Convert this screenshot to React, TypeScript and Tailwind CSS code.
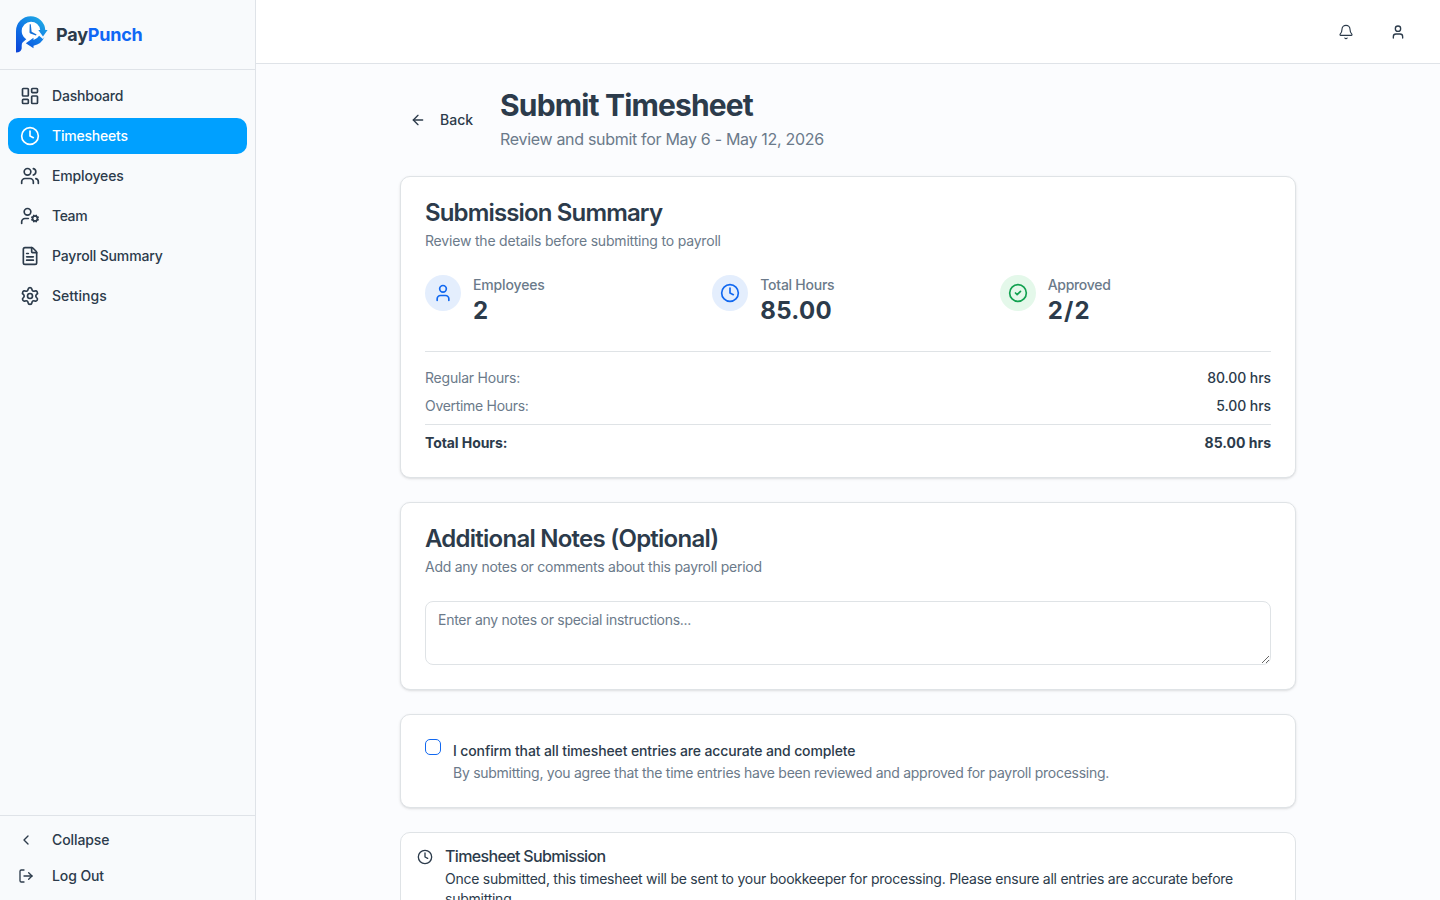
import { useState, type ReactNode } from "react";
import clsx from "clsx";
import {
  ArrowLeft,
  Bell,
  ChevronLeft,
  CircleCheck,
  Clock,
  FileText,
  LayoutDashboard,
  LogOut,
  Settings,
  User,
  UserCog,
  Users,
} from "lucide-react";

function LogoMark() {
  return (
    <svg viewBox="0 0 32 38" className="h-[38px] w-8 shrink-0">
      <defs>
        <linearGradient
          id="mark"
          gradientUnits="userSpaceOnUse"
          x1="0"
          y1="34"
          x2="26"
          y2="4"
        >
          <stop offset="0" stopColor="#0b45d8" />
          <stop offset="0.5" stopColor="#0f74e6" />
          <stop offset="1" stopColor="#1ea6e4" />
        </linearGradient>
      </defs>
      <circle cx="15" cy="15" r="10" fill="#fff" />
      {/* P stem running into the top of the ring */}
      <path
        fill="url(#mark)"
        d="M0 15A14.800 14.800 0 0 1 14.800 .3A14.700 14.700 0 0 1 29.300 14H31.600L27 20.400 22.300 14H24.200A9.300 9.300 0 0 0 15 5.700A9.300 9.300 0 0 0 5.700 15A9.300 9.300 0 0 0 8.800 21.900L10.300 23.300 6.800 26.200Q5.700 27.300 5.700 29.500V32.500Q5 36.300 0 36.500z"
      />
      {/* lower sweep with its arrow head */}
      <path
        fill="url(#mark)"
        d="M28.600 20.800A14.800 14.800 0 0 1 17.500 29.700v2.600l-7.700-5 7.700-5.500v2.200a9.300 9.300 0 0 0 5.600-4.300l3.800 3.200z"
      />
      <path
        d="M13.700 8.300h1.100l.8 7.500 5 2.700-.6 1-5.600-2q-.9-.3-.9-1.300z"
        fill="#1470d8"
      />
    </svg>
  );
}

const navItems = [
  { label: "Dashboard", icon: LayoutDashboard, tracking: "tracking-[-0.2px]" },
  { label: "Timesheets", icon: Clock, tracking: "tracking-[-0.22px]" },
  { label: "Employees", icon: Users, tracking: "tracking-[-0.16px]" },
  { label: "Team", icon: UserCog, tracking: "tracking-[-0.4px]" },
  { label: "Payroll Summary", icon: FileText, tracking: "tracking-[-0.17px]" },
  { label: "Settings", icon: Settings, tracking: "tracking-[0.03px]" },
];

function Sidebar() {
  const [active, setActive] = useState("Timesheets");

  return (
    <aside className="flex w-64 shrink-0 flex-col border-r border-[#dfe3e8] bg-[#f8fafc]">
      <div className="flex h-[70px] items-center gap-2 border-b border-[#dfe3e8] px-4">
        <LogoMark />
        <span className="text-lg font-bold tracking-[-0.22px]">
          Pay<span className="text-[#0f67f5]">Punch</span>
        </span>
      </div>

      <nav className="flex flex-1 flex-col gap-1 p-2">
        {navItems.map(({ label, icon: NavIcon, tracking }) => (
          <button
            key={label}
            onClick={() => setActive(label)}
            className={clsx(
              "flex h-9 items-center gap-3 rounded-[10px] px-3 text-sm font-medium",
              tracking,
              active === label && "bg-[#00a0ff] text-white"
            )}
          >
            <NavIcon className="size-5" />
            {label}
          </button>
        ))}
      </nav>

      <div className="flex flex-col gap-1 border-t border-[#dfe3e8] p-2 text-sm font-medium tracking-[-0.1px]">
        <button className="flex h-8 items-center gap-[18px] px-2.5">
          <ChevronLeft className="size-4" />
          Collapse
        </button>
        <button className="flex h-8 items-center gap-[18px] px-2.5">
          <LogOut className="size-4" />
          Log Out
        </button>
      </div>
    </aside>
  );
}

function Card({ children }: { children: ReactNode }) {
  return (
    <section className="rounded-[10px] border border-[#dfe3e6] bg-white p-6 shadow-sm">
      {children}
    </section>
  );
}

const stats = [
  {
    label: "Employees",
    value: "2",
    icon: User,
    color: "bg-[#e4eefd] text-[#1168f0]",
    labelTracking: "tracking-[-0.15px]",
    valueTracking: "tracking-normal",
  },
  {
    label: "Total Hours",
    value: "85.00",
    icon: Clock,
    color: "bg-[#e4eefd] text-[#1168f0]",
    labelTracking: "tracking-[-0.25px]",
    valueTracking: "tracking-[0.3px]",
  },
  {
    label: "Approved",
    value: "2/2",
    icon: CircleCheck,
    color: "bg-[#e4f8ea] text-[#12a150]",
    labelTracking: "tracking-[-0.3px]",
    valueTracking: "tracking-[1.2px]",
  },
];

function SummaryCard() {
  return (
    <Card>
      <h2 className="text-2xl leading-6 font-semibold tracking-[-0.85px]">
        Submission Summary
      </h2>
      <p className="mt-1.5 text-sm tracking-[-0.19px] text-[#6b7a8a]">
        Review the details before submitting to payroll
      </p>

      <div className="mt-6 grid grid-cols-3 gap-4">
        {stats.map(
          ({ label, value, icon: StatIcon, color, labelTracking, valueTracking }) => (
            <div key={label} className="flex items-start gap-3">
              <div
                className={clsx(
                  "flex size-9 items-center justify-center rounded-full",
                  color
                )}
              >
                <StatIcon className="size-5" />
              </div>
              <div>
                <p
                  className={clsx(
                    "text-sm font-medium text-[#6b7a8a]",
                    labelTracking
                  )}
                >
                  {label}
                </p>
                <p className={clsx("text-2xl font-bold", valueTracking)}>
                  {value}
                </p>
              </div>
            </div>
          )
        )}
      </div>

      <dl className="mt-6 border-t border-[#dfe3e6] pt-4 text-sm">
        <div className="flex justify-between">
          <dt className="tracking-[-0.21px] text-[#6b7a8a]">Regular Hours:</dt>
          <dd className="font-medium tracking-[-0.08px]">80.00 hrs</dd>
        </div>
        <div className="mt-2 flex justify-between">
          <dt className="tracking-[-0.3px] text-[#6b7a8a]">Overtime Hours:</dt>
          <dd className="font-medium tracking-[-0.08px]">5.00 hrs</dd>
        </div>
        <div className="mt-2 flex justify-between border-t border-[#dfe3e6] pt-2 font-bold">
          <dt className="tracking-[-0.08px]">Total Hours:</dt>
          <dd>85.00 hrs</dd>
        </div>
      </dl>
    </Card>
  );
}

function NotesCard() {
  return (
    <Card>
      <h2 className="text-2xl leading-6 font-semibold tracking-[-0.75px]">
        Additional Notes (Optional)
      </h2>
      <p className="mt-1.5 text-sm tracking-[-0.26px] text-[#6b7a8a]">
        Add any notes or comments about this payroll period
      </p>
      <textarea
        placeholder="Enter any notes or special instructions..."
        className="mt-6 block h-16 w-full resize-y rounded-lg border border-[#dfe3e6] px-3 py-2 text-sm tracking-[-0.27px] placeholder:text-[#6b7a8a]"
      />
    </Card>
  );
}

function ConfirmCard() {
  return (
    <Card>
      <div className="flex items-start gap-3">
        <input
          id="confirm"
          type="checkbox"
          className="size-4 shrink-0 appearance-none rounded-[5px] border border-[#1168f0] bg-white checked:bg-[#1168f0]"
        />
        <div className="text-sm">
          <label
            htmlFor="confirm"
            className="block leading-6 font-medium tracking-[-0.12px]"
          >
            I confirm that all timesheet entries are accurate and complete
          </label>
          <p className="tracking-[-0.27px] text-[#6b7a8a]">
            By submitting, you agree that the time entries have been reviewed
            and approved for payroll processing.
          </p>
        </div>
      </div>
    </Card>
  );
}

export default function App() {
  return (
    <div className="flex h-screen overflow-hidden bg-[#fbfcfe] font-['Inter',sans-serif] text-[#2c3b4b]">
      <Sidebar />

      <div className="flex min-w-0 flex-1 flex-col">
        <header className="flex h-16 shrink-0 items-center justify-end gap-4 border-b border-[#dfe3e8] bg-white px-6">
          <button
            aria-label="Notifications"
            className="flex size-9 items-center justify-center"
          >
            <Bell className="size-4" strokeWidth={1.7} />
          </button>
          <button
            aria-label="Account"
            className="flex size-9 items-center justify-center"
          >
            <User className="size-4" />
          </button>
        </header>

        <main className="flex-1 overflow-hidden p-6">
          <div className="mx-auto flex max-w-4xl flex-col gap-6">
            <div className="flex items-center gap-4">
              <button className="flex h-8 w-[84px] items-center gap-3.5 px-2.5 text-sm font-medium">
                <ArrowLeft className="size-4" />
                Back
              </button>
              <div className="h-16">
                <h1 className="text-3xl leading-[34px] font-bold tracking-[-0.84px]">
                  Submit Timesheet
                </h1>
                <p className="mt-[5px] tracking-[-0.31px] text-[#6b7a8a]">
                  Review and submit for May 6 - May 12, 2026
                </p>
              </div>
            </div>

            <SummaryCard />
            <NotesCard />
            <ConfirmCard />

            <div className="flex items-start gap-3 rounded-[10px] border border-[#dfe3e6] bg-white p-4">
              <Clock className="size-4 shrink-0" />
              <div>
                <h5 className="mb-[5px] leading-[15px] font-medium tracking-[-0.65px]">
                  Timesheet Submission
                </h5>
                <p className="text-sm tracking-[-0.25px]">
                  Once submitted, this timesheet will be sent to your bookkeeper
                  for processing. Please ensure all entries are accurate before
                  submitting.
                </p>
              </div>
            </div>
          </div>
        </main>
      </div>
    </div>
  );
}
